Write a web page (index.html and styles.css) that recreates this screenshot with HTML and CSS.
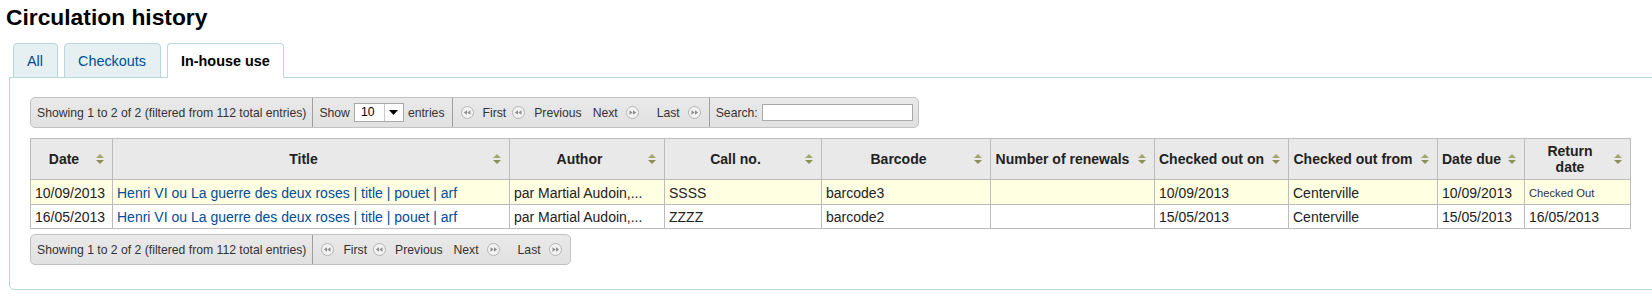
FILE: index.html
```html
<!DOCTYPE html>
<html lang="en">
<head>
    <meta charset="UTF-8">
    <meta name="viewport" content="width=device-width, initial-scale=1.0">
    <link rel="stylesheet" href="styles.css">
    <title>Circulation history</title>
</head>
<body>
    <h1>Circulation history</h1>

    <div class="tabs">
        <ul class="tab-nav">
            <li><a href="#">All</a></li>
            <li><a href="#">Checkouts</a></li>
            <li class="active"><a href="#">In-house use</a></li>
        </ul>

        <div class="tab-panel">
            <div class="dt-toolbar">
                <div class="dt-section dt-info">Showing 1 to 2 of 2 (filtered from 112 total entries)</div>
                <div class="dt-section dt-length">
                    Show
                    <span class="select">
                        <span class="select-value">10</span>
                        <span class="select-arrow"><svg width="9" height="5" viewBox="0 0 9 5"><path d="M0 0H9L4.5 5Z" fill="#000"/></svg></span>
                    </span>
                    entries
                </div>
                <div class="dt-section dt-paging">
                    <span class="pg-btn first"><svg class="pg-icon" viewBox="0 0 13 13"><circle cx="6.5" cy="6.5" r="6" fill="#f2f2f2" stroke="#b4b4b4"/><path d="M2.8 6.5L6 4.2V8.8Z M6.3 6.5L9.5 4.2V8.8Z" fill="#8e8e8e"/></svg>First</span>
                    <span class="pg-btn previous"><svg class="pg-icon" viewBox="0 0 13 13"><circle cx="6.5" cy="6.5" r="6" fill="#f2f2f2" stroke="#b4b4b4"/><path d="M2.8 6.5L6 4.2V8.8Z M6.3 6.5L9.5 4.2V8.8Z" fill="#8e8e8e"/></svg>Previous</span>
                    <span class="pg-btn next">Next<svg class="pg-icon" viewBox="0 0 13 13"><circle cx="6.5" cy="6.5" r="6" fill="#f2f2f2" stroke="#b4b4b4"/><path d="M10.2 6.5L7 4.2V8.8Z M6.7 6.5L3.5 4.2V8.8Z" fill="#8e8e8e"/></svg></span>
                    <span class="pg-btn last">Last<svg class="pg-icon" viewBox="0 0 13 13"><circle cx="6.5" cy="6.5" r="6" fill="#f2f2f2" stroke="#b4b4b4"/><path d="M10.2 6.5L7 4.2V8.8Z M6.7 6.5L3.5 4.2V8.8Z" fill="#8e8e8e"/></svg></span>
                </div>
                <div class="dt-section dt-filter">
                    <label for="search">Search:</label>
                    <input type="text" id="search">
                </div>
            </div>

            <table class="history">
                <colgroup>
                    <col style="width: 82px">
                    <col style="width: 397px">
                    <col style="width: 155px">
                    <col style="width: 157px">
                    <col style="width: 169px">
                    <col style="width: 164px">
                    <col style="width: 134px">
                    <col style="width: 149px">
                    <col style="width: 87px">
                    <col style="width: 106px">
                </colgroup>
                <thead>
                    <tr>
                        <th>Date<svg class="sort" viewBox="0 0 8 10"><path d="M4 0L8 4H0Z" fill="#a2a76c"/><path d="M0 6H8L4 10Z" fill="#8b9156"/></svg></th>
                        <th>Title<svg class="sort" viewBox="0 0 8 10"><path d="M4 0L8 4H0Z" fill="#a2a76c"/><path d="M0 6H8L4 10Z" fill="#8b9156"/></svg></th>
                        <th>Author<svg class="sort" viewBox="0 0 8 10"><path d="M4 0L8 4H0Z" fill="#a2a76c"/><path d="M0 6H8L4 10Z" fill="#8b9156"/></svg></th>
                        <th>Call no.<svg class="sort" viewBox="0 0 8 10"><path d="M4 0L8 4H0Z" fill="#a2a76c"/><path d="M0 6H8L4 10Z" fill="#8b9156"/></svg></th>
                        <th>Barcode<svg class="sort" viewBox="0 0 8 10"><path d="M4 0L8 4H0Z" fill="#a2a76c"/><path d="M0 6H8L4 10Z" fill="#8b9156"/></svg></th>
                        <th class="tight">Number of renewals<svg class="sort" viewBox="0 0 8 10"><path d="M4 0L8 4H0Z" fill="#a2a76c"/><path d="M0 6H8L4 10Z" fill="#8b9156"/></svg></th>
                        <th class="tight">Checked out on<svg class="sort" viewBox="0 0 8 10"><path d="M4 0L8 4H0Z" fill="#a2a76c"/><path d="M0 6H8L4 10Z" fill="#8b9156"/></svg></th>
                        <th class="tight">Checked out from<svg class="sort" viewBox="0 0 8 10"><path d="M4 0L8 4H0Z" fill="#a2a76c"/><path d="M0 6H8L4 10Z" fill="#8b9156"/></svg></th>
                        <th class="tight">Date due<svg class="sort" viewBox="0 0 8 10"><path d="M4 0L8 4H0Z" fill="#a2a76c"/><path d="M0 6H8L4 10Z" fill="#8b9156"/></svg></th>
                        <th>Return<br>date<svg class="sort" viewBox="0 0 8 10"><path d="M4 0L8 4H0Z" fill="#a2a76c"/><path d="M0 6H8L4 10Z" fill="#8b9156"/></svg></th>
                    </tr>
                </thead>
                <tbody>
                    <tr class="highlight">
                        <td>10/09/2013</td>
                        <td><a href="#">Henri VI ou La guerre des deux roses | title | pouet | arf</a></td>
                        <td>par Martial Audoin,...</td>
                        <td>SSSS</td>
                        <td>barcode3</td>
                        <td></td>
                        <td>10/09/2013</td>
                        <td>Centerville</td>
                        <td>10/09/2013</td>
                        <td><span class="status">Checked Out</span></td>
                    </tr>
                    <tr>
                        <td>16/05/2013</td>
                        <td><a href="#">Henri VI ou La guerre des deux roses | title | pouet | arf</a></td>
                        <td>par Martial Audoin,...</td>
                        <td>ZZZZ</td>
                        <td>barcode2</td>
                        <td></td>
                        <td>15/05/2013</td>
                        <td>Centerville</td>
                        <td>15/05/2013</td>
                        <td>16/05/2013</td>
                    </tr>
                </tbody>
            </table>

            <div class="dt-toolbar bottom">
                <div class="dt-section dt-info">Showing 1 to 2 of 2 (filtered from 112 total entries)</div>
                <div class="dt-section dt-paging">
                    <span class="pg-btn first"><svg class="pg-icon" viewBox="0 0 13 13"><circle cx="6.5" cy="6.5" r="6" fill="#f2f2f2" stroke="#b4b4b4"/><path d="M2.8 6.5L6 4.2V8.8Z M6.3 6.5L9.5 4.2V8.8Z" fill="#8e8e8e"/></svg>First</span>
                    <span class="pg-btn previous"><svg class="pg-icon" viewBox="0 0 13 13"><circle cx="6.5" cy="6.5" r="6" fill="#f2f2f2" stroke="#b4b4b4"/><path d="M2.8 6.5L6 4.2V8.8Z M6.3 6.5L9.5 4.2V8.8Z" fill="#8e8e8e"/></svg>Previous</span>
                    <span class="pg-btn next">Next<svg class="pg-icon" viewBox="0 0 13 13"><circle cx="6.5" cy="6.5" r="6" fill="#f2f2f2" stroke="#b4b4b4"/><path d="M10.2 6.5L7 4.2V8.8Z M6.7 6.5L3.5 4.2V8.8Z" fill="#8e8e8e"/></svg></span>
                    <span class="pg-btn last">Last<svg class="pg-icon" viewBox="0 0 13 13"><circle cx="6.5" cy="6.5" r="6" fill="#f2f2f2" stroke="#b4b4b4"/><path d="M10.2 6.5L7 4.2V8.8Z M6.7 6.5L3.5 4.2V8.8Z" fill="#8e8e8e"/></svg></span>
                </div>
            </div>
        </div>
    </div>
</body>
</html>
```

FILE: styles.css
```css
html, body {
    overflow: hidden;
}

body {
    margin: 0;
    padding: 0 0 0 6px;
    font-family: "Liberation Sans", Arial, sans-serif;
    font-size: 12px;
    color: #000;
    background-color: #fff;
}

a {
    color: #004d99;
    text-decoration: none;
}

h1 {
    margin: 4px 0 0;
    font-size: 22.8px;
    line-height: 26px;
    font-weight: bold;
}

.tabs {
    margin-left: 3px;
}

.tab-nav {
    display: flex;
    margin: 13px 0 0;
    padding: 0 0 0 3.5px;
    list-style: none;
}

.tab-nav li {
    position: relative;
    z-index: 1;
    margin: 0 6px -1px 0;
    border: 1px solid #b9d8d9;
    border-radius: 4px 4px 0 0;
    background-color: #e6f0f2;
}

.tab-nav li a {
    display: block;
    padding: 9px 13.5px 7px;
    font-size: 14.4px;
    line-height: 17px;
}

.tab-nav li.active {
    background-color: #fff;
    border-bottom-color: #fff;
}

.tab-nav li.active a {
    color: #000;
    font-weight: bold;
}

.tab-panel {
    margin-right: -40px;
    padding: 19px 20px 24px;
    border: 1px solid #b9d8d9;
    border-radius: 0 0 0 5px;
}

/* datatables toolbar */
.dt-toolbar {
    display: flex;
    width: max-content;
    height: 31px;
    box-sizing: border-box;
    border: 1px solid #c2c2c2;
    border-radius: 5px;
    background: linear-gradient(#e9e9e9, #e1e1e1);
    color: #333;
    font-size: 12.2px;
}

.dt-toolbar.bottom {
    margin-top: 5px;
}

.dt-section {
    display: flex;
    align-items: center;
    border-left: 1px solid #9e9e9e;
}

.dt-section:first-child {
    border-left: none;
}

.dt-info {
    padding: 0 6px;
}

.dt-length {
    gap: 4px;
    padding: 0 7px 0 6px;
}

.select {
    display: inline-flex;
    width: 50px;
    height: 19px;
    box-sizing: border-box;
    border: 1px solid #a8a8a8;
    background-color: #fff;
    color: #000;
}

.select-value {
    flex: 1;
    padding-left: 6px;
    line-height: 17px;
}

.select-arrow {
    display: flex;
    align-items: center;
    justify-content: center;
    width: 18px;
    border-left: 1px solid #c9c9c9;
}

.dt-paging {
    padding: 0 8px;
}

.pg-btn {
    display: flex;
    align-items: center;
}

.pg-icon {
    width: 13px;
    height: 13px;
}

.first .pg-icon,
.previous .pg-icon {
    margin-right: 9px;
}

.next .pg-icon,
.last .pg-icon {
    margin-left: 8px;
}

.previous {
    margin-left: 6px;
}

.next {
    margin-left: 11px;
}

.last {
    margin-left: 18px;
}

.dt-filter {
    gap: 4px;
    padding: 0 5px 0 6px;
}

.dt-filter input {
    width: 151px;
    height: 17px;
    box-sizing: border-box;
    margin: 0;
    border: 1px solid #a9a9a9;
    background-color: #fff;
}

/* history table */
.history {
    width: 1601px;
    margin-top: 10px;
    table-layout: fixed;
    border-collapse: collapse;
    font-size: 14px;
    line-height: 16px;
}

.history th,
.history td {
    border: 1px solid #bcbcbc;
    white-space: nowrap;
}

.history th {
    position: relative;
    padding: 4px 19px 4px 4px;
    background-color: #e9e9e9;
    color: #222;
    text-align: center;
    font-weight: bold;
}

.history th.tight {
    padding-right: 24px;
}

.history td {
    padding: 4px 4px 3px;
    color: #222;
    text-align: left;
}

.history tr.highlight td {
    background-color: #ffffe2;
}

.sort {
    position: absolute;
    right: 8px;
    top: 50%;
    width: 8px;
    height: 10px;
    margin-top: -5px;
}

.status {
    font-size: 11.2px;
    color: #333;
}
```
